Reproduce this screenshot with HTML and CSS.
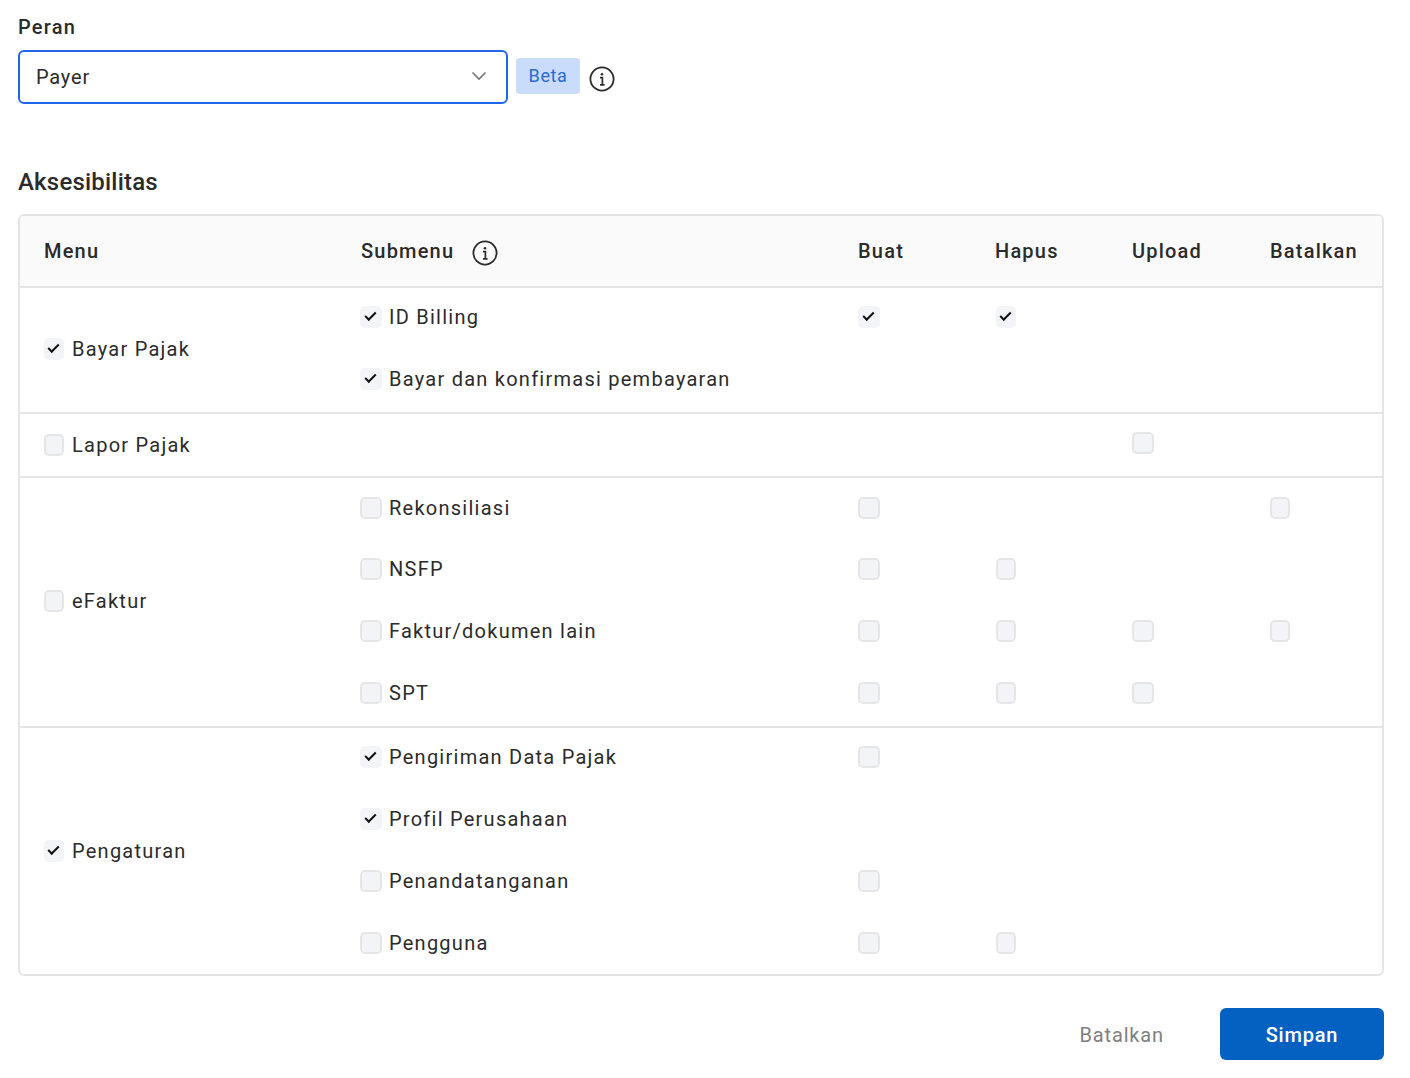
FILE: index.html
```html
<!DOCTYPE html>
<html lang="en">
<head>
<meta charset="UTF-8">
<meta name="viewport" content="width=device-width, initial-scale=1.0">
<title>Peran</title>
<link rel="stylesheet" href="styles.css">
</head>
<body>

<section class="role">
    <label class="role-label">Peran</label>
    <div class="role-row">
        <div class="select">
            <span>Payer</span>
            <svg class="chevron" width="16" height="10" viewBox="0 0 16 10"><path d="M1.5 1.5 8 8l6.5-6.5" fill="none" stroke="#757575" stroke-width="1.6"/></svg>
        </div>
        <span class="beta">Beta</span>
        <svg class="info" width="26" height="26" viewBox="0 0 26 26"><circle cx="13" cy="13" r="11.6" fill="none" stroke="#2b2b2b" stroke-width="1.8"/><circle cx="13" cy="8.2" r="1.3" fill="#2b2b2b"/><path d="M11 11.6h2.4v7M11 18.8h4.6" fill="none" stroke="#2b2b2b" stroke-width="1.7"/></svg>
    </div>
</section>

<h3 class="title">Aksesibilitas</h3>

<div class="table-box">
<table>
    <thead>
        <tr>
            <th class="col-menu">Menu</th>
            <th class="col-sub"><span class="th-flex">Submenu
                <svg class="info" width="26" height="26" viewBox="0 0 26 26"><circle cx="13" cy="13" r="11.6" fill="none" stroke="#2b2b2b" stroke-width="1.8"/><circle cx="13" cy="8.2" r="1.3" fill="#2b2b2b"/><path d="M11 11.6h2.4v7M11 18.8h4.6" fill="none" stroke="#2b2b2b" stroke-width="1.7"/></svg>
            </span></th>
            <th class="col-act">Buat</th>
            <th class="col-act">Hapus</th>
            <th class="col-upload">Upload</th>
            <th class="col-last">Batalkan</th>
        </tr>
    </thead>
    <tbody class="bayar">
        <tr>
            <td rowspan="2" class="menu"><span class="opt"><i class="box on"></i>Bayar Pajak</span></td>
            <td><span class="opt"><i class="box wide on"></i>ID Billing</span></td>
            <td><i class="box wide on"></i></td>
            <td><i class="box on"></i></td>
            <td></td>
            <td></td>
        </tr>
        <tr>
            <td><span class="opt"><i class="box wide on"></i>Bayar dan konfirmasi pembayaran</span></td>
            <td></td><td></td><td></td><td></td>
        </tr>
    </tbody>
    <tbody class="lapor">
        <tr class="group">
            <td class="menu"><span class="opt"><i class="box"></i>Lapor Pajak</span></td>
            <td></td>
            <td></td>
            <td></td>
            <td><i class="box wide"></i></td>
            <td></td>
        </tr>
    </tbody>
    <tbody class="efaktur">
        <tr class="group">
            <td rowspan="4" class="menu"><span class="opt"><i class="box"></i>eFaktur</span></td>
            <td><span class="opt"><i class="box wide"></i>Rekonsiliasi</span></td>
            <td><i class="box wide"></i></td>
            <td></td>
            <td></td>
            <td><i class="box"></i></td>
        </tr>
        <tr>
            <td><span class="opt"><i class="box wide"></i>NSFP</span></td>
            <td><i class="box wide"></i></td>
            <td><i class="box"></i></td>
            <td></td>
            <td></td>
        </tr>
        <tr>
            <td><span class="opt"><i class="box wide"></i>Faktur/dokumen lain</span></td>
            <td><i class="box wide"></i></td>
            <td><i class="box"></i></td>
            <td><i class="box wide"></i></td>
            <td><i class="box"></i></td>
        </tr>
        <tr>
            <td><span class="opt"><i class="box wide"></i>SPT</span></td>
            <td><i class="box wide"></i></td>
            <td><i class="box"></i></td>
            <td><i class="box wide"></i></td>
            <td></td>
        </tr>
    </tbody>
    <tbody class="pengaturan">
        <tr class="group">
            <td rowspan="4" class="menu"><span class="opt"><i class="box on"></i>Pengaturan</span></td>
            <td><span class="opt"><i class="box wide on"></i>Pengiriman Data Pajak</span></td>
            <td><i class="box wide"></i></td>
            <td></td><td></td><td></td>
        </tr>
        <tr>
            <td><span class="opt"><i class="box wide on"></i>Profil Perusahaan</span></td>
            <td></td><td></td><td></td><td></td>
        </tr>
        <tr>
            <td><span class="opt"><i class="box wide"></i>Penandatanganan</span></td>
            <td><i class="box wide"></i></td>
            <td></td><td></td><td></td>
        </tr>
        <tr>
            <td><span class="opt"><i class="box wide"></i>Pengguna</span></td>
            <td><i class="box wide"></i></td>
            <td><i class="box"></i></td>
            <td></td><td></td>
        </tr>
    </tbody>
</table>
</div>

<div class="actions">
    <button class="cancel-button">Batalkan</button>
    <button class="save-button">Simpan</button>
</div>

</body>
</html>
```

FILE: styles.css
```css
body {
    margin: 0;
    padding: 0 26px 0 18px;
    font-family: Roboto, Arial, sans-serif;
    color: #2b2b2b;
    background-color: #ffffff;
}

.role {
    padding-top: 14px;
}
.role-label {
    display: block;
    font-size: 20px;
    line-height: 26px;
    font-weight: 500;
    letter-spacing: 1.2px;
    margin-bottom: 10px;
}
.role-row {
    display: flex;
    align-items: center;
}
.select {
    width: 490px;
    height: 54px;
    box-sizing: border-box;
    border: 2px solid #1f66ee;
    border-radius: 6px;
    padding: 0 19px 0 16px;
    display: flex;
    align-items: center;
    justify-content: space-between;
    font-size: 20px;
    letter-spacing: 0.8px;
}
.chevron {
    margin-top: -3px;
}
.beta {
    margin-left: 8px;
    width: 64px;
    height: 36px;
    box-sizing: border-box;
    padding-bottom: 2px;
    margin-top: -2px;
    border-radius: 4px;
    background-color: #c9dcfb;
    color: #2a6bd0;
    font-size: 18px;
    letter-spacing: 0.6px;
    display: flex;
    align-items: center;
    justify-content: center;
}
.role-row .info {
    margin-left: 9px;
    margin-top: 3px;
}

.title {
    margin: 62px 0 16px;
    font-size: 24px;
    line-height: 32px;
    font-weight: 500;
    letter-spacing: 0.2px;
}

.table-box {
    border: 2px solid #e5e5e5;
    border-radius: 6px;
    overflow: hidden;
}
table {
    width: 100%;
    border-collapse: separate;
    border-spacing: 0;
    table-layout: fixed;
}
th {
    height: 72px;
    padding: 0;
    box-sizing: border-box;
    background-color: #fafafa;
    border-bottom: 2px solid #e5e5e5;
    text-align: left;
    font-size: 20px;
    font-weight: 500;
    letter-spacing: 1.2px;
}
.col-menu {
    width: 341px;
    padding-left: 24px;
}
.col-sub {
    width: 497px;
}
.col-act {
    width: 137px;
}
.col-upload {
    width: 138px;
}
.th-flex {
    display: flex;
    align-items: center;
    gap: 18px;
}
.th-flex .info {
    margin-top: 3px;
}

td {
    height: 62px;
    padding: 19px 0 0;
    box-sizing: border-box;
    vertical-align: top;
    font-size: 20px;
    line-height: 24px;
    letter-spacing: 1.25px;
}
tr.group td {
    border-top: 2px solid #e5e5e5;
    padding-top: 17px;
}
.bayar td {
    padding-top: 17px;
}
.lapor td {
    height: 64px;
}
.efaktur td {
    padding-top: 17px;
}
.efaktur tr.group td {
    height: 64px;
    padding-top: 18px;
}
/* menu cell sits in the middle of its rows, overrides the per-group paddings */
tbody td.menu,
tbody tr.group td.menu {
    padding: 0 0 0 24px;
    vertical-align: middle;
}
.bayar td.menu,
.efaktur tr.group td.menu {
    padding-bottom: 2px;
}

.opt {
    display: flex;
    align-items: center;
    gap: 7px;
}
td:not(.menu) .opt {
    margin-left: -1px;
}
td.menu .opt {
    gap: 8px;
}
.box {
    display: block;
    position: relative;
    width: 20px;
    height: 22px;
    box-sizing: border-box;
    border: 2px solid #e6e6e6;
    border-radius: 5px;
    background-color: #f3f4f7;
    margin-top: 1px;
}
.opt .box {
    margin-top: -1px;
}
td:not(.menu) > .box:not(.wide) {
    margin-left: 1px;
}
td:last-child > .box:not(.wide) {
    margin-left: 0;
}
.box.wide {
    width: 22px;
}
.box.on {
    border-color: #f3f4f7;
}
.box.on::after {
    content: "";
    position: absolute;
    left: 2px;
    top: 4px;
    width: 9px;
    height: 4px;
    border-left: 2px solid #111111;
    border-bottom: 2px solid #111111;
    transform: rotate(-45deg);
}
.box.wide.on::after {
    left: 3px;
}

.actions {
    display: flex;
    justify-content: flex-end;
    align-items: center;
    margin-top: 32px;
}
.cancel-button, .save-button {
    font-family: Roboto, Arial, sans-serif;
    font-size: 20px;
    border: none;
    cursor: pointer;
    padding: 2px 0 0;
}
.cancel-button {
    background: none;
    color: #808080;
    letter-spacing: 0.85px;
    margin-right: 56px;
}
.save-button {
    width: 164px;
    height: 52px;
    border-radius: 6px;
    background-color: #0461c2;
    color: #ffffff;
    font-weight: 500;
    letter-spacing: 0.8px;
}
```
